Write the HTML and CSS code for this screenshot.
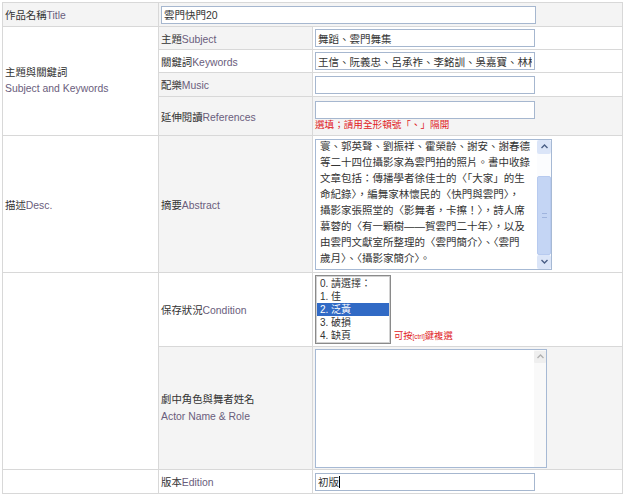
FILE: index.html
```html
<!DOCTYPE html>
<html lang="zh-Hant">
<head>
<meta charset="utf-8">
<title>作品資料</title>
<link rel="stylesheet" href="styles.css">
</head>
<body>
<table class="form">
  <colgroup><col class="c1"><col class="c2"><col class="c3"></colgroup>
  <tr class="h24 shade">
    <th class="lab">作品名稱<span class="en">Title</span></th>
    <td colspan="2"><input class="inp wide" value="雲門快門20"></td>
  </tr>
  <tr class="h23">
    <th class="lab two" rowspan="4">主題與關鍵詞<br><span class="en">Subject and Keywords</span></th>
    <th class="lab shade">主題<span class="en">Subject</span></th>
    <td><input class="inp" value="舞蹈、雲門舞集"></td>
  </tr>
  <tr class="h23">
    <th class="lab">關鍵詞<span class="en">Keywords</span></th>
    <td><input class="inp" value="王信、阮義忠、呂承祚、李銘訓、吳嘉寶、林柏樑、張照堂"></td>
  </tr>
  <tr class="h24">
    <th class="lab shade">配樂<span class="en">Music</span></th>
    <td><input class="inp" value=""></td>
  </tr>
  <tr class="h39 shade">
    <th class="lab">延伸閱讀<span class="en">References</span></th>
    <td class="refs"><input class="inp" value=""><div class="hint">選填；請用全形頓號「、」隔開</div></td>
  </tr>
  <tr class="h137">
    <th class="lab">描述<span class="en">Desc.</span></th>
    <th class="lab shade">摘要<span class="en">Abstract</span></th>
    <td>
      <div class="tbox abs">
        <div class="tbox-text">
          <div>寰、郭英聲、劉振祥、霍榮齡、謝安、謝春德</div>
          <div>等二十四位攝影家為雲門拍的照片。書中收錄</div>
          <div>文章包括：傳播學者徐佳士的〈「大家」的生</div>
          <div>命紀錄〉，編舞家林懷民的〈快門與雲門〉，</div>
          <div>攝影家張照堂的〈影舞者，卡擦！〉，詩人席</div>
          <div>慕蓉的〈有一顆樹——賀雲門二十年〉，以及</div>
          <div>由雲門文獻室所整理的〈雲門簡介〉、〈雲門</div>
          <div>歲月〉、〈攝影家簡介〉。</div>
        </div>
        <div class="sb">
          <div class="sb-btn"><svg width="7" height="5" viewBox="0 0 7 5"><polyline points="0.5,4 3.5,1 6.5,4" fill="none" stroke="#4a5f86" stroke-width="1.4"/></svg></div>
          <div class="sb-track"><div class="sb-thumb"><span class="grip"></span></div></div>
          <div class="sb-btn"><svg width="7" height="5" viewBox="0 0 7 5"><polyline points="0.5,1 3.5,4 6.5,1" fill="none" stroke="#4a5f86" stroke-width="1.4"/></svg></div>
        </div>
      </div>
    </td>
  </tr>
  <tr class="h74">
    <th class="lab" rowspan="2"></th>
    <th class="lab">保存狀況<span class="en">Condition</span></th>
    <td class="white">
      <div class="lb" role="listbox">
        <div class="opt">0. 請選擇：</div>
        <div class="opt">1. 佳</div>
        <div class="opt sel">2. 泛黃</div>
        <div class="opt">3. 破損</div>
        <div class="opt">4. 缺頁</div>
      </div> <span class="hint2">可按<span class="ctrl">[ctrl]</span>鍵複選</span>
    </td>
  </tr>
  <tr class="h123 shade">
    <th class="lab actor">劇中角色與舞者姓名<br><span class="en">Actor Name &amp; Role</span></th>
    <td>
      <div class="tbox act">
        <div class="tbox-text"></div>
        <div class="sb plain">
          <div class="sb-btn gray"><svg width="7" height="5" viewBox="0 0 7 5"><polyline points="0.5,4 3.5,1 6.5,4" fill="none" stroke="#b0b0b0" stroke-width="1.3"/></svg></div>
        </div>
      </div>
    </td>
  </tr>
  <tr class="h24">
    <th class="lab"></th>
    <th class="lab">版本<span class="en">Edition</span></th>
    <td><span class="caret-wrap"><input class="inp" value="初版"><span class="caret"></span></span></td>
  </tr>
</table>
</body>
</html>
```

FILE: styles.css
```css
html, body {
  margin: 0;
  padding: 0;
  background: #fff;
}
body {
  padding: 2px;
  font-family: "Liberation Sans", Arial, "Noto Sans CJK TC", sans-serif;
  font-size: 10.4px;
  color: #333;
}
.form {
  border-collapse: collapse;
  table-layout: fixed;
  width: 621px;
}
.c1 { width: 156px; }
.c2 { width: 154px; }
.form th, .form td {
  border: 1px solid #d8d8d8;
  padding: 0 2px;
  text-align: left;
  font-weight: normal;
  vertical-align: middle;
  white-space: nowrap;
}
.shade th, .shade td, th.shade { background: #f4f4f4; }
.shade th[rowspan], td.white { background: #fff; }
.h23 { height: 23px; }
.h24 { height: 24px; }
.h39 { height: 39px; }
.h74 { height: 74px; }
.h123 { height: 123px; }
.h137 { height: 137px; }
.lab { color: #333; }
.en { color: #6a5d7c; }
.two { line-height: 16px; }
.actor { line-height: 17px; padding-top: 12px; }

.inp {
  display: block;
  box-sizing: border-box;
  width: 220px;
  height: 18px;
  margin: 0;
  padding: 0 2px;
  border: 1px solid #a6b7cf;
  background: #fff;
  color: #333;
  font-family: "Liberation Sans", Arial, "Noto Sans CJK TC", sans-serif;
  font-size: 10.5px;
  outline: none;
}
.inp.wide { width: 375px; }

.refs { padding-top: 0; }
.hint {
  color: #e0201c;
  font-size: 9.6px;
  line-height: 12px;
  margin-top: 0;
}

.tbox {
  display: flex;
  box-sizing: border-box;
  border: 1px solid #a6b9d4;
  background: #fff;
  overflow: hidden;
}
.tbox-text { flex: 1; }
.abs { width: 237px; height: 131px; }
.abs .tbox-text {
  padding-left: 4px;
  margin-top: -2px;
  font-size: 10.5px;
  line-height: 16px;
  color: #333;
}
.act { width: 232px; height: 119px; }

.sb {
  width: 14px;
  display: flex;
  flex-direction: column;
  background: #fbfcfe;
}
.sb-btn {
  height: 14px;
  display: flex;
  align-items: center;
  justify-content: center;
  background: #dbe5f8;
  border-radius: 2px;
  flex: none;
}
.sb-track {
  flex: 1;
  display: flex;
  flex-direction: column;
  padding-top: 22px;
}
.sb-thumb {
  flex: 1;
  background: #c4d5f4;
  border: 1px solid #b7caef;
  border-radius: 2px;
  display: flex;
  align-items: center;
  justify-content: center;
}
.grip {
  width: 5px;
  height: 5px;
  border-top: 1px solid #9fb4de;
  border-bottom: 1px solid #9fb4de;
  box-sizing: border-box;
}
.sb.plain {
  width: 12px;
  background: #f9f9f9;
  padding-top: 1px;
  margin-right: 0;
}
.sb-btn.gray {
  height: 12px;
  background: #efefef;
  border-radius: 1px;
}

.lb {
  display: inline-block;
  vertical-align: baseline;
  box-sizing: border-box;
  width: 76px;
  padding: 1px;
  border: 1px solid #8a8a8a;
  box-shadow: inset 0 0 0 1px #d2d2d2;
  background: #fff;
}
.opt {
  height: 13px;
  line-height: 13px;
  padding-left: 3px;
  font-size: 10px;
  color: #333;
}
.opt.sel { background: #316ac5; color: #fff; }
.hint2 {
  color: #e0201c;
  font-size: 9.3px;
}
.ctrl { font-size: 6.5px; }

.caret-wrap { position: relative; display: block; width: 220px; }
.caret {
  position: absolute;
  left: 24px;
  top: 3px;
  width: 1px;
  height: 12px;
  background: #000;
}
```
